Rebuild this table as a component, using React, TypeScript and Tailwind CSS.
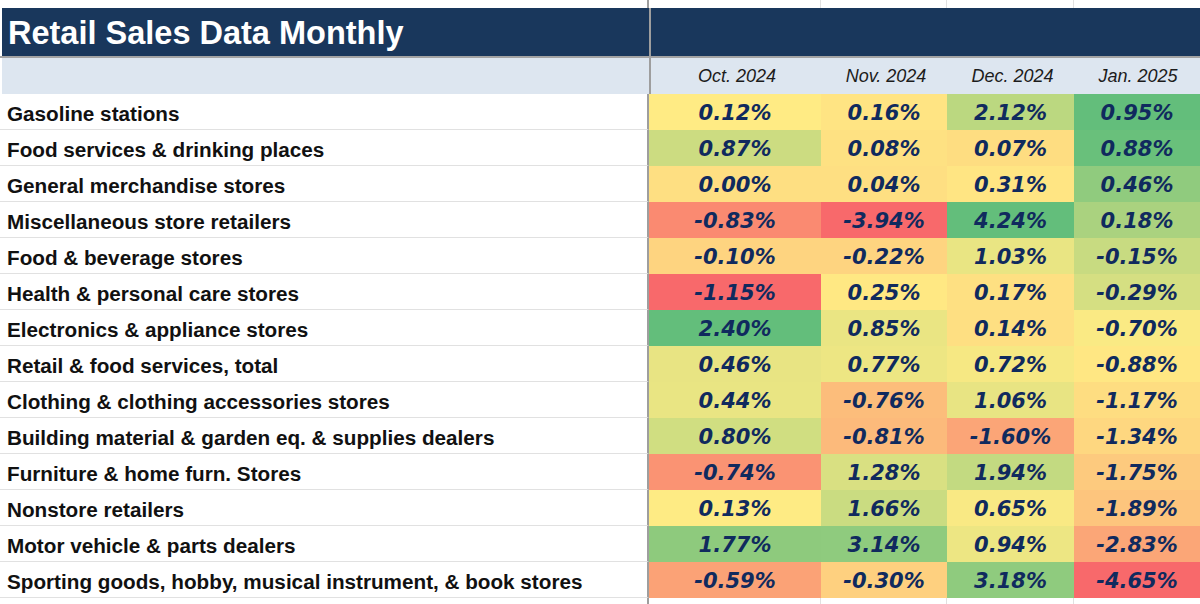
import React from 'react';

type Row = { label: string; values: number[] };

const rows: Row[] = [
  { label: 'Gasoline stations', values: [0.12, 0.16, 2.12, 0.95] },
  { label: 'Food services & drinking places', values: [0.87, 0.08, 0.07, 0.88] },
  { label: 'General merchandise stores', values: [0.0, 0.04, 0.31, 0.46] },
  { label: 'Miscellaneous store retailers', values: [-0.83, -3.94, 4.24, 0.18] },
  { label: 'Food & beverage stores', values: [-0.1, -0.22, 1.03, -0.15] },
  { label: 'Health & personal care stores', values: [-1.15, 0.25, 0.17, -0.29] },
  { label: 'Electronics & appliance stores', values: [2.4, 0.85, 0.14, -0.7] },
  { label: 'Retail & food services, total', values: [0.46, 0.77, 0.72, -0.88] },
  { label: 'Clothing & clothing accessories stores', values: [0.44, -0.76, 1.06, -1.17] },
  { label: 'Building material & garden eq. & supplies dealers', values: [0.8, -0.81, -1.6, -1.34] },
  { label: 'Furniture & home furn. Stores', values: [-0.74, 1.28, 1.94, -1.75] },
  { label: 'Nonstore retailers', values: [0.13, 1.66, 0.65, -1.89] },
  { label: 'Motor vehicle & parts dealers', values: [1.77, 3.14, 0.94, -2.83] },
  { label: 'Sporting goods, hobby, musical instrument, & book stores', values: [-0.59, -0.3, 3.18, -4.65] },
];

const months = ['Oct. 2024', 'Nov. 2024', 'Dec. 2024', 'Jan. 2025'];
const widths = ['w-[172px]', 'w-[126px]', 'w-[127px]', 'flex-1'];

// per-column colour scale: min (red), mid (yellow), max (green)
const scales: [number, number, number][] = [
  [-1.15, 0.12, 2.4],
  [-2.7, 0.32, 4.24],
  [-3.4, 0.5, 4.24],
  [-4.65, -0.75, 0.95],
];

const RED = [248, 105, 107];
const YELLOW = [255, 235, 132];
const GREEN = [99, 190, 123];

const mix = (a: number[], b: number[], t: number) =>
  `rgb(${a.map((c, i) => Math.round(c + (b[i] - c) * t)).join(',')})`;

const cellColor = (v: number, col: number) => {
  const [min, mid, max] = scales[col];
  if (v >= mid) return mix(YELLOW, GREEN, Math.min(1, (v - mid) / (max - mid)));
  return mix(YELLOW, RED, Math.min(1, (mid - v) / (mid - min)));
};

const labelFont = "[font-family:'Liberation_Sans',Arial,sans-serif]";
const numFont = "[font-family:'DejaVu_Sans',Verdana,sans-serif]";

const GridStrip = ({ h }: { h: string }) => (
  <div className={`flex ${h} bg-white`}>
    <div className="w-[649px] border-r-2 border-[#9e9e9e]" />
    <div className="w-[172px] border-r border-[#e1e1e1]" />
    <div className="w-[126px] border-r border-[#e1e1e1]" />
    <div className="w-[127px] border-r border-[#e1e1e1]" />
    <div className="flex-1" />
  </div>
);

export default function App() {
  return (
    <div className={`w-[1200px] h-[604px] overflow-hidden bg-white ${labelFont}`}>
      <GridStrip h="h-[8px]" />

      {/* title */}
      <div className="flex h-[50px] border-b-2 border-[#a3a3a3] bg-white">
        <div className="w-[649px] ml-[2px] pl-[6px] pt-[3px] flex items-center bg-[#19375c] border-r-2 border-[#9e9e9e]">
          <span className={`text-white font-bold text-[32.5px] leading-none ${labelFont}`}>
            Retail Sales Data Monthly
          </span>
        </div>
        <div className="flex-1 bg-[#19375c]" />
      </div>

      {/* month header */}
      <div className="flex h-[36px]">
        <div className="w-[649px] ml-[2px] bg-[#dde6f0] border-r-2 border-[#9e9e9e]" />
        {months.map((m, i) => (
          <div
            key={m}
            className={`${widths[i]} bg-[#dde6f0] flex items-center justify-center pt-[1px] text-[18px] italic text-[#1c1c1c] ${labelFont}`}
          >
            {m}
          </div>
        ))}
      </div>

      {/* data */}
      {rows.map((r) => (
        <div key={r.label} className="flex h-[36px]">
          <div className="w-[649px] pl-[7px] pt-[4px] flex items-center border-r-2 border-[#9e9e9e] border-b border-b-[#e1e1e1] bg-white">
            <span className={`font-bold text-[20.7px] text-[#111] whitespace-nowrap ${labelFont}`}>{r.label}</span>
          </div>
          {r.values.map((v, i) => (
            <div
              key={i}
              className={`${widths[i]} flex items-center justify-center pt-[3px]`}
              style={{ backgroundColor: cellColor(v, i) }}
            >
              <span className={`font-bold italic text-[21px] text-[#102a5e] ${numFont}`}>
                {v.toFixed(2)}%
              </span>
            </div>
          ))}
        </div>
      ))}

      <GridStrip h="h-[6px]" />
    </div>
  );
}
